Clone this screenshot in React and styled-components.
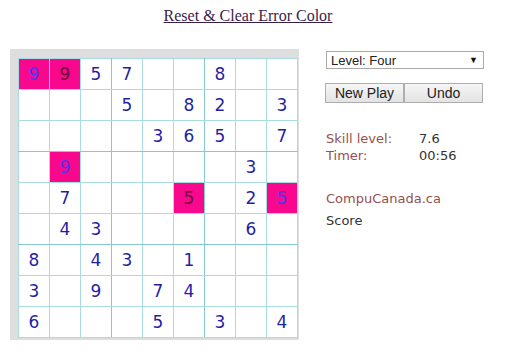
import React from 'react';
import styled, { createGlobalStyle } from 'styled-components';

const GlobalStyle = createGlobalStyle`
  body {
    margin: 0;
    background: #ffffff;
    font-family: "DejaVu Sans", Verdana, sans-serif;
  }
`;

const Page = styled.div`
  width: 512px;
  height: 363px;
  overflow: hidden;
`;

const Header = styled.div`
  width: 496px;
  text-align: center;
  padding-top: 6px;
  height: 49px;
  box-sizing: border-box;
`;

const ResetLink = styled.a`
  font-family: "Liberation Serif", "Times New Roman", serif;
  font-size: 16px;
  color: #3b1d4c;
  text-decoration: underline;
  cursor: pointer;
`;

const Main = styled.div`
  display: flex;
  align-items: flex-start;
  padding-left: 10px;
`;

const BoardFrame = styled.div`
  background: #dedede;
  padding: 9px 1px 2px 8px;
`;

const Board = styled.table`
  border-collapse: collapse;
  background: #ffffff;
`;

const Cell = styled.td`
  width: 31px;
  height: 31px;
  padding: 0;
  box-sizing: border-box;
  text-align: center;
  vertical-align: middle;
  font-size: 17px;
  line-height: 30px;
  border: 1px solid #a9dbe0;
  border-right-color: ${p => (p.$boxRight ? '#86c8cf' : '#a9dbe0')};
  border-bottom-color: ${p => (p.$boxBottom ? '#86c8cf' : '#a9dbe0')};
  background: ${p => (p.$error ? '#f7088c' : '#ffffff')};
  color: ${p => (p.$tone === 'blue' ? '#4a38f2' : p.$tone === 'dark' ? '#6d0b36' : '#1f1fa6')};
`;

const Side = styled.div`
  margin-left: 27px;
  padding-top: 2px;
  width: 160px;
`;

const LevelSelect = styled.div`
  width: 158px;
  height: 18px;
  box-sizing: border-box;
  border: 1px solid #a9a9a9;
  display: flex;
  align-items: center;
  justify-content: space-between;
  padding: 0 5px 0 4px;
  font-family: "Liberation Sans", Arial, sans-serif;
  font-size: 13px;
  color: #222;
`;

const Arrow = styled.span`
  font-size: 9px;
  color: #111;
`;

const ButtonRow = styled.div`
  display: flex;
  margin-top: 14px;
  margin-left: -1px;
`;

const Btn = styled.button`
  width: 79px;
  height: 20px;
  margin: 0;
  padding: 0;
  border: 1px solid #adadad;
  background: linear-gradient(#f6f6f6, #e3e3e3);
  font-family: "Liberation Sans", Arial, sans-serif;
  font-size: 14px;
  color: #222;
`;

const Stats = styled.div`
  margin-top: 28px;
  display: grid;
  grid-template-columns: 93px auto;
  row-gap: 1px;
  font-size: 13px;
  line-height: 16px;
`;

const Label = styled.span`
  color: #94504f;
`;

const Value = styled.span`
  color: #333;
`;

const Site = styled.div`
  margin-top: 27px;
  font-size: 13px;
  color: #94504f;
`;

const Score = styled.div`
  margin-top: 7px;
  font-size: 13px;
  color: #333;
`;

const grid = [
  ['9', '9', '5', '7', '', '', '8', '', ''],
  ['', '', '', '5', '', '8', '2', '', '3'],
  ['', '', '', '', '3', '6', '5', '', '7'],
  ['', '9', '', '', '', '', '', '3', ''],
  ['', '7', '', '', '', '5', '', '2', '5'],
  ['', '4', '3', '', '', '', '', '6', ''],
  ['8', '', '4', '3', '', '1', '', '', ''],
  ['3', '', '9', '', '7', '4', '', '', ''],
  ['6', '', '', '', '5', '', '3', '', '4'],
];

const errors = {
  '0-0': 'blue',
  '0-1': 'dark',
  '3-1': 'blue',
  '4-5': 'dark',
  '4-8': 'blue',
};

export default function App() {
  return (
    <Page>
      <GlobalStyle />
      <Header>
        <ResetLink>Reset &amp; Clear Error Color</ResetLink>
      </Header>
      <Main>
        <BoardFrame>
          <Board>
            <tbody>
              {grid.map((row, r) => (
                <tr key={r}>
                  {row.map((v, c) => {
                    const tone = errors[`${r}-${c}`];
                    return (
                      <Cell
                        key={c}
                        $error={!!tone}
                        $tone={tone}
                        $boxRight={c === 2 || c === 5}
                        $boxBottom={r === 2 || r === 5}
                      >
                        {v}
                      </Cell>
                    );
                  })}
                </tr>
              ))}
            </tbody>
          </Board>
        </BoardFrame>
        <Side>
          <LevelSelect>
            <span>Level: Four</span>
            <Arrow>▼</Arrow>
          </LevelSelect>
          <ButtonRow>
            <Btn>New Play</Btn>
            <Btn>Undo</Btn>
          </ButtonRow>
          <Stats>
            <Label>Skill level:</Label>
            <Value>7.6</Value>
            <Label>Timer:</Label>
            <Value>00:56</Value>
          </Stats>
          <Site>CompuCanada.ca</Site>
          <Score>Score</Score>
        </Side>
      </Main>
    </Page>
  );
}
